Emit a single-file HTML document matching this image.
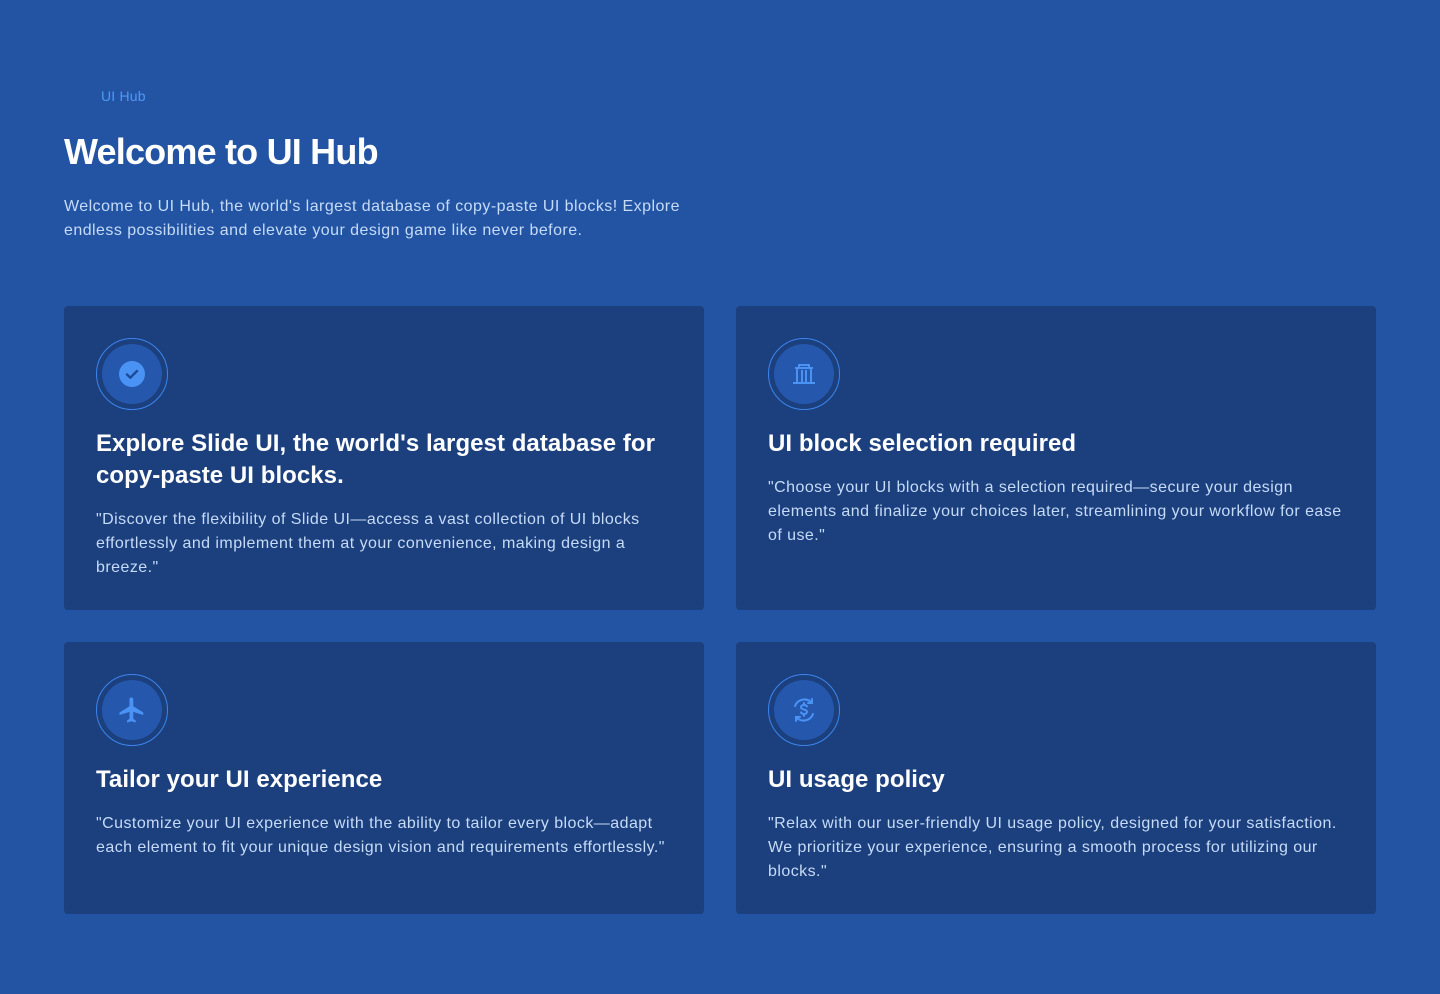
<!DOCTYPE html>
<html><head><style>
*{margin:0;padding:0;box-sizing:border-box}
body{width:1440px;height:994px;background:#2354a3;font-family:"Liberation Sans",sans-serif;overflow:hidden}
.crumb{position:absolute;left:101px;top:88px;font-size:14px;color:#4b9bf5;letter-spacing:0.2px}
h1{position:absolute;left:64px;top:131px;font-size:36px;font-weight:700;color:#fff;letter-spacing:-0.8px}
.lead{position:absolute;left:64px;top:195px;width:640px;font-size:16px;line-height:24px;color:#c5dbf8;letter-spacing:0.45px}
.card{position:absolute;width:640px;background:#1c3f7d;border-radius:4px;padding:32px}
.ic{width:72px;height:72px;border-radius:50%;border:1px solid #3b86ee;display:flex;align-items:center;justify-content:center}
.ic>div{width:60px;height:60px;border-radius:50%;background:#2557ad;display:flex;align-items:center;justify-content:center}
h2{margin-top:18px;font-size:24px;line-height:32px;font-weight:700;color:#fff;letter-spacing:0.05px}
p{margin-top:16px;font-size:16px;line-height:24px;color:#c5dbf8;letter-spacing:0.45px}
</style></head><body>
<div class="crumb">UI Hub</div>
<h1>Welcome to UI Hub</h1>
<div class="lead">Welcome to UI Hub, the world's largest database of copy-paste UI blocks! Explore<br>endless possibilities and elevate your design game like never before.</div>

<div class="card" style="left:64px;top:306px;height:304px">
<div class="ic"><div><svg width="28" height="28" viewBox="0 0 28 28"><circle cx="14" cy="14" r="13" fill="#4a93f5"/><path d="M9 14.5l3.3 3.2L19 11" stroke="#1f4a95" stroke-width="2.4" fill="none" stroke-linecap="round" stroke-linejoin="round"/></svg></div></div>
<h2>Explore Slide UI, the world's largest database for copy-paste UI blocks.</h2>
<p>"Discover the flexibility of Slide UI—access a vast collection of UI blocks effortlessly and implement them at your convenience, making design a breeze."</p>
</div>

<div class="card" style="left:736px;top:306px;height:304px">
<div class="ic"><div><svg width="30" height="30" viewBox="0 0 30 30" fill="none" stroke="#4a93f5" stroke-width="2"><path d="M10 9V6h10v3M6 9h18M8 9v14M13 11v12M17 11v12M22 9v14M4 24h22"/></svg></div></div>
<h2>UI block selection required</h2>
<p>"Choose your UI blocks with a selection required—secure your design elements and finalize your choices later, streamlining your workflow for ease of use."</p>
</div>

<div class="card" style="left:64px;top:642px;height:272px">
<div class="ic"><div><svg width="30" height="30" viewBox="0 0 24 24"><path fill="#4a93f5" d="M21 16v-2l-8-5V3.5a1.5 1.5 0 0 0-3 0V9l-8 5v2l8-2.5V19l-2 1.5V22l3.5-1 3.5 1v-1.5L13 19v-5.5z"/></svg></div></div>
<h2>Tailor your UI experience</h2>
<p>"Customize your UI experience with the ability to tailor every block—adapt each element to fit your unique design vision and requirements effortlessly."</p>
</div>

<div class="card" style="left:736px;top:642px;height:272px">
<div class="ic"><div><svg width="28" height="28" viewBox="0 0 28 28" fill="none" stroke="#4a93f5" stroke-width="2" stroke-linecap="round"><path d="M5 10a10 10 0 0 1 17-3M23 18a10 10 0 0 1-17 3"/><path d="M22 3v4h-4M6 25v-4h4"/><path d="M17 10.5c-.5-1-1.7-1.5-3-1.5-1.8 0-3 .9-3 2.2 0 3 6 1.6 6 4.6 0 1.3-1.3 2.2-3 2.2-1.4 0-2.6-.6-3-1.6M14 7v2M14 18v2"/></svg></div></div>
<h2>UI usage policy</h2>
<p>"Relax with our user-friendly UI usage policy, designed for your satisfaction. We prioritize your experience, ensuring a smooth process for utilizing our blocks."</p>
</div>
</body></html>
